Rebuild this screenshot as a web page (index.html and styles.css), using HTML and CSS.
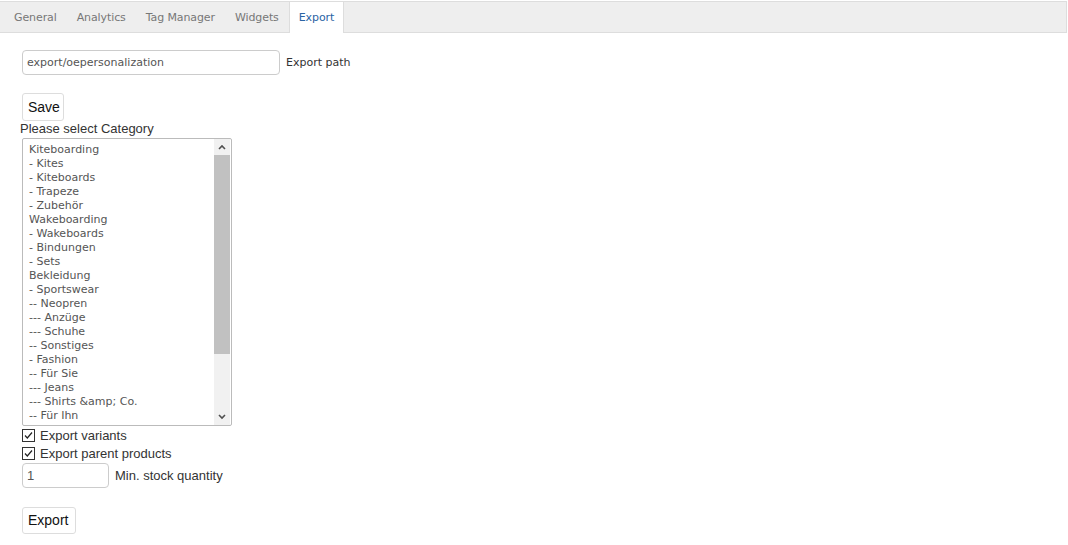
FILE: index.html
```html
<!DOCTYPE html>
<html>
<head>
<meta charset="utf-8">
<link rel="stylesheet" href="styles.css">
</head>
<body>
<div class="tabs">
  <span class="tab">General</span>
  <span class="tab">Analytics</span>
  <span class="tab">Tag Manager</span>
  <span class="tab">Widgets</span>
  <span class="tab active">Export</span>
</div>
<div class="content">
  <div class="row path-row">
    <div class="input wide">export/oepersonalization</div>
    <span class="label">Export path</span>
  </div>
  <div class="btn save">Save</div>
  <div class="caption">Please select Category</div>
  <div class="select">
    <div class="options">
      <div>Kiteboarding</div>
      <div>- Kites</div>
      <div>- Kiteboards</div>
      <div>- Trapeze</div>
      <div>- Zubehör</div>
      <div>Wakeboarding</div>
      <div>- Wakeboards</div>
      <div>- Bindungen</div>
      <div>- Sets</div>
      <div>Bekleidung</div>
      <div>- Sportswear</div>
      <div>-- Neopren</div>
      <div>--- Anzüge</div>
      <div>--- Schuhe</div>
      <div>-- Sonstiges</div>
      <div>- Fashion</div>
      <div>-- Für Sie</div>
      <div>--- Jeans</div>
      <div>--- Shirts &amp;amp; Co.</div>
      <div>-- Für Ihn</div>
    </div>
    <div class="scrollbar">
      <div class="arrow"><svg width="8" height="6" viewBox="0 0 8 6"><path d="M1 5 L4 2 L7 5" fill="none" stroke="#505050" stroke-width="1.6"/></svg></div>
      <div class="track"><div class="thumb"></div></div>
      <div class="arrow"><svg width="8" height="6" viewBox="0 0 8 6"><path d="M1 1 L4 4 L7 1" fill="none" stroke="#505050" stroke-width="1.6"/></svg></div>
    </div>
  </div>
  <div class="checks">
    <label class="check"><span class="box"><svg width="11" height="11" viewBox="0 0 11 11"><path d="M2 5.5 L4.3 8 L9 2.5" fill="none" stroke="#222" stroke-width="1.2"/></svg></span>Export variants</label>
    <label class="check"><span class="box"><svg width="11" height="11" viewBox="0 0 11 11"><path d="M2 5.5 L4.3 8 L9 2.5" fill="none" stroke="#222" stroke-width="1.2"/></svg></span>Export parent products</label>
  </div>
  <div class="row stock-row">
    <div class="input small">1</div>
    <span class="label2">Min. stock quantity</span>
  </div>
  <div class="btn export">Export</div>
</div>
</body>
</html>
```

FILE: styles.css
```css
html, body {
  margin: 0;
  padding: 0;
  background: #fff;
}
body {
  font-family: "Liberation Sans", Arial, sans-serif;
  color: #333;
}
.tabs {
  margin-top: 1px;
  width: 1067px;
  height: 32px;
  box-sizing: border-box;
  background: #eee;
  border-top: 1px solid #ddd;
  border-right: 1px solid #ddd;
  border-bottom: 1px solid #ddd;
  display: flex;
  padding-left: 4px;
}
.tab {
  font-family: "DejaVu Sans", Verdana, sans-serif;
  font-size: 11px;
  color: #777;
  padding: 0 10px;
  line-height: 31px;
  letter-spacing: -0.1px;
}
.tab.active {
  background: #fff;
  color: #2a64a4;
  border-left: 1px solid #ddd;
  border-right: 1px solid #ddd;
  height: 31px;
  padding: 0 9px;
}
.content {
  padding: 17px 0 0 22px;
}
.row {
  display: flex;
  align-items: center;
}
.input {
  box-sizing: border-box;
  border: 1px solid #ccc;
  border-radius: 4px;
  height: 25px;
  line-height: 23px;
  padding-left: 4px;
  font-family: "DejaVu Sans", Verdana, sans-serif;
  font-size: 11px;
  color: #555;
}
.input.wide { width: 258px; }
.input.small {
  width: 87px;
  font-family: "Liberation Sans", Arial, sans-serif;
  font-size: 13px;
}
.label {
  margin-left: 6px;
  font-family: "DejaVu Sans", Verdana, sans-serif;
  font-size: 11px;
  color: #333;
}
.label2 {
  margin-left: 6px;
  font-size: 13px;
  color: #333;
}
.btn {
  display: inline-block;
  box-sizing: border-box;
  border: 1px solid #ddd;
  border-radius: 3px;
  background: #fff;
  color: #111;
  font-size: 14px;
  padding: 0 5px;
}
.save {
  margin-top: 18px;
  height: 28px;
  line-height: 26px;
  width: 42px;
}
.caption {
  margin-left: -2px;
  margin-top: 0;
  font-size: 13px;
  line-height: 15px;
  color: #333;
}
.select {
  margin-top: 2px;
  width: 210px;
  height: 288px;
  box-sizing: border-box;
  border: 1px solid #bbb;
  border-radius: 2px;
  display: flex;
  overflow: hidden;
}
.options {
  flex: 1;
  padding: 4px 0 0 6px;
  font-family: "DejaVu Sans", Verdana, sans-serif;
  font-size: 11px;
  line-height: 14px;
  color: #555;
}
.scrollbar {
  width: 16px;
  margin-right: 1px;
  display: flex;
  flex-direction: column;
  background: #f1f1f1;
}
.arrow {
  height: 16px;
  display: flex;
  align-items: center;
  justify-content: center;
}
.track {
  flex: 1;
}
.thumb {
  height: 199px;
  background: #c1c1c1;
}
.checks {
  display: flex;
  flex-direction: column;
}
.check {
  display: flex;
  align-items: center;
  font-size: 13px;
  color: #333;
  height: 18px;
}
.box {
  width: 11px;
  height: 11px;
  border: 1px solid #333;
  margin-right: 5px;
  display: flex;
  background: #fff;
}
.stock-row {
  margin-top: 1px;
}
.export {
  margin-top: 19px;
  height: 27px;
  line-height: 25px;
  width: 54px;
}
```
